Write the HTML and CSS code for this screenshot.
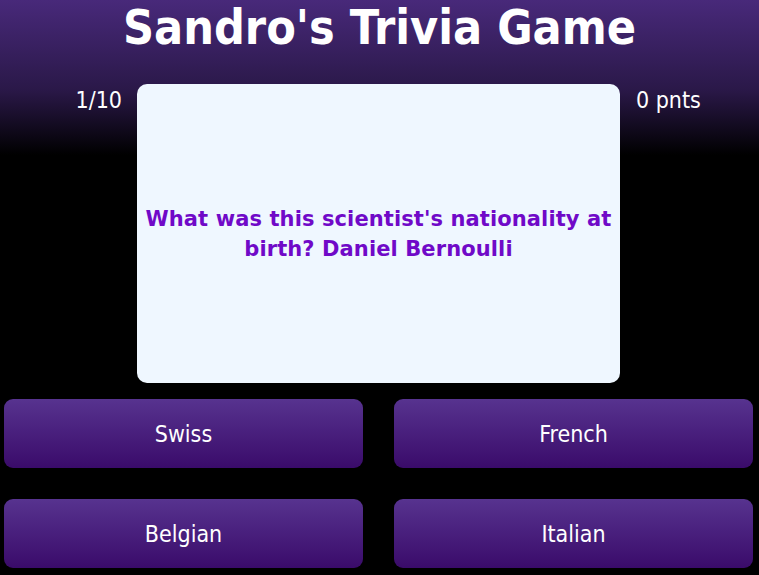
FILE: index.html
```html
<!DOCTYPE html>
<html>
<head>
<meta charset="utf-8">
<title>Sandro's Trivia Game</title>
<link rel="stylesheet" href="styles.css">
</head>
<body>
<div class="page">
  <h1 class="title">Sandro's Trivia Game</h1>
  <div class="stage">
    <div class="side counter">1/10</div>
    <div class="card">
      <p class="question">What was this scientist's nationality at birth? Daniel Bernoulli</p>
    </div>
    <div class="side score">0 pnts</div>
  </div>
  <div class="answers">
    <button class="answer">Swiss</button>
    <button class="answer">French</button>
    <button class="answer">Belgian</button>
    <button class="answer">Italian</button>
  </div>
</div>
</body>
</html>
```
FILE: styles.css
```css
html, body {
  margin: 0;
  padding: 0;
  height: 100%;
}
body {
  background: #000 linear-gradient(to bottom, #48297a 0px, #2a1848 90px, #000 155px) no-repeat;
  font-family: "DejaVu Sans Condensed", "DejaVu Sans", Verdana, sans-serif;
  color: #fff;
}
.page {
  display: flex;
  flex-direction: column;
}
.title {
  margin: 0;
  text-align: center;
  font-size: 48px;
  font-weight: bold;
  line-height: 54px;
  height: 84px;
}
.stage {
  display: flex;
  justify-content: center;
  align-items: flex-start;
  padding-left: 9px;
}
.side {
  font-size: 23px;
  line-height: 30px;
  padding-top: 1px;
}
.counter {
  width: 60px;
  margin-right: 15px;
  text-align: right;
}
.score {
  width: 70px;
  margin-left: 16px;
  text-align: left;
}
.card {
  width: 483px;
  height: 299px;
  background: #eff7ff;
  border-radius: 10px;
  display: flex;
  align-items: center;
  justify-content: center;
  padding: 0 6px;
  box-sizing: border-box;
}
.question {
  margin: 0;
  text-align: center;
  color: #7009c8;
  font-family: "DejaVu Sans", Verdana, sans-serif;
  font-weight: bold;
  font-size: 21px;
  letter-spacing: 0.1px;
  line-height: 30px;
}
.answers {
  display: grid;
  grid-template-columns: 359px 359px;
  grid-auto-rows: 69px;
  column-gap: 31px;
  row-gap: 31px;
  padding: 16px 0 0 4px;
}
.answer {
  border: none;
  border-radius: 9px;
  background: linear-gradient(to bottom, #57338f 0%, #3a0b6a 100%);
  color: #fff;
  font-family: inherit;
  font-size: 23px;
  padding: 0;
  cursor: pointer;
}
```
